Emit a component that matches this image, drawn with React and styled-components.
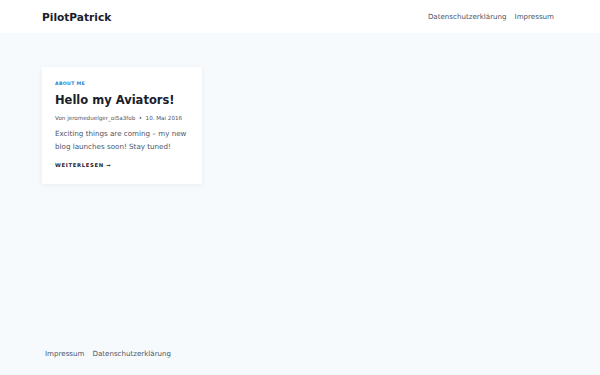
import React from 'react';
import styled, { createGlobalStyle } from 'styled-components';

const GlobalStyle = createGlobalStyle`
  html, body {
    margin: 0;
    padding: 0;
    background: #f7fafc;
  }
  body {
    font-family: "DejaVu Sans", sans-serif;
    color: #4a5568;
  }
`;

const Page = styled.div`
  display: flex;
  flex-direction: column;
  height: 375px;
  width: 600px;
  background: #f7fafc;
`;

const Header = styled.header`
  display: flex;
  align-items: center;
  justify-content: space-between;
  height: 33px;
  padding: 0 46px 0 42px;
  background: #ffffff;
`;

const SiteTitle = styled.div`
  font-size: 10.6px;
  font-weight: 700;
  color: #1a202c;
`;

const Nav = styled.nav`
  display: flex;
  gap: 8px;
  font-size: 7.1px;
  color: #4a5568;
`;

const Main = styled.main`
  flex: 1;
  padding: 34px 42px 0;
`;

const Card = styled.article`
  width: 160px;
  box-sizing: border-box;
  padding: 13px 13px 15px;
  background: #ffffff;
  box-shadow: 0 1px 6px rgba(26, 32, 44, 0.06);
`;

const Category = styled.div`
  font-size: 4.7px;
  font-weight: 700;
  letter-spacing: 0.3px;
  text-transform: uppercase;
  color: #3182ce;
  line-height: 7px;
`;

const Title = styled.h2`
  margin: 5px 0 0;
  font-size: 11.5px;
  font-weight: 700;
  line-height: 16px;
  white-space: nowrap;
  color: #1a202c;
`;

const Meta = styled.div`
  display: flex;
  align-items: center;
  gap: 3.5px;
  margin-top: 6px;
  font-size: 5.6px;
  line-height: 9px;
  white-space: nowrap;
  color: #4a5568;
`;

const Excerpt = styled.p`
  margin: 3.5px 0 0;
  font-size: 7.15px;
  line-height: 13px;
  color: #4a5568;
`;

const ReadMore = styled.div`
  margin-top: 8.5px;
  font-size: 5.3px;
  font-weight: 700;
  letter-spacing: 0.65px;
  text-transform: uppercase;
  color: #1a202c;
  line-height: 8px;
`;

const Footer = styled.footer`
  display: flex;
  gap: 8px;
  padding: 0 45px 17px;
  font-size: 7.1px;
  color: #4a5568;
`;

export default function App() {
  return (
    <Page>
      <GlobalStyle />
      <Header>
        <SiteTitle>PilotPatrick</SiteTitle>
        <Nav>
          <span>Datenschutzerklärung</span>
          <span>Impressum</span>
        </Nav>
      </Header>
      <Main>
        <Card>
          <Category>About me</Category>
          <Title>Hello my Aviators!</Title>
          <Meta>
            <span>Von jeromeduelger_oi5a3fob</span>
            <span>•</span>
            <span>10. Mai 2016</span>
          </Meta>
          <Excerpt>Exciting things are coming – my new blog launches soon! Stay tuned!</Excerpt>
          <ReadMore>Weiterlesen →</ReadMore>
        </Card>
      </Main>
      <Footer>
        <span>Impressum</span>
        <span>Datenschutzerklärung</span>
      </Footer>
    </Page>
  );
}
